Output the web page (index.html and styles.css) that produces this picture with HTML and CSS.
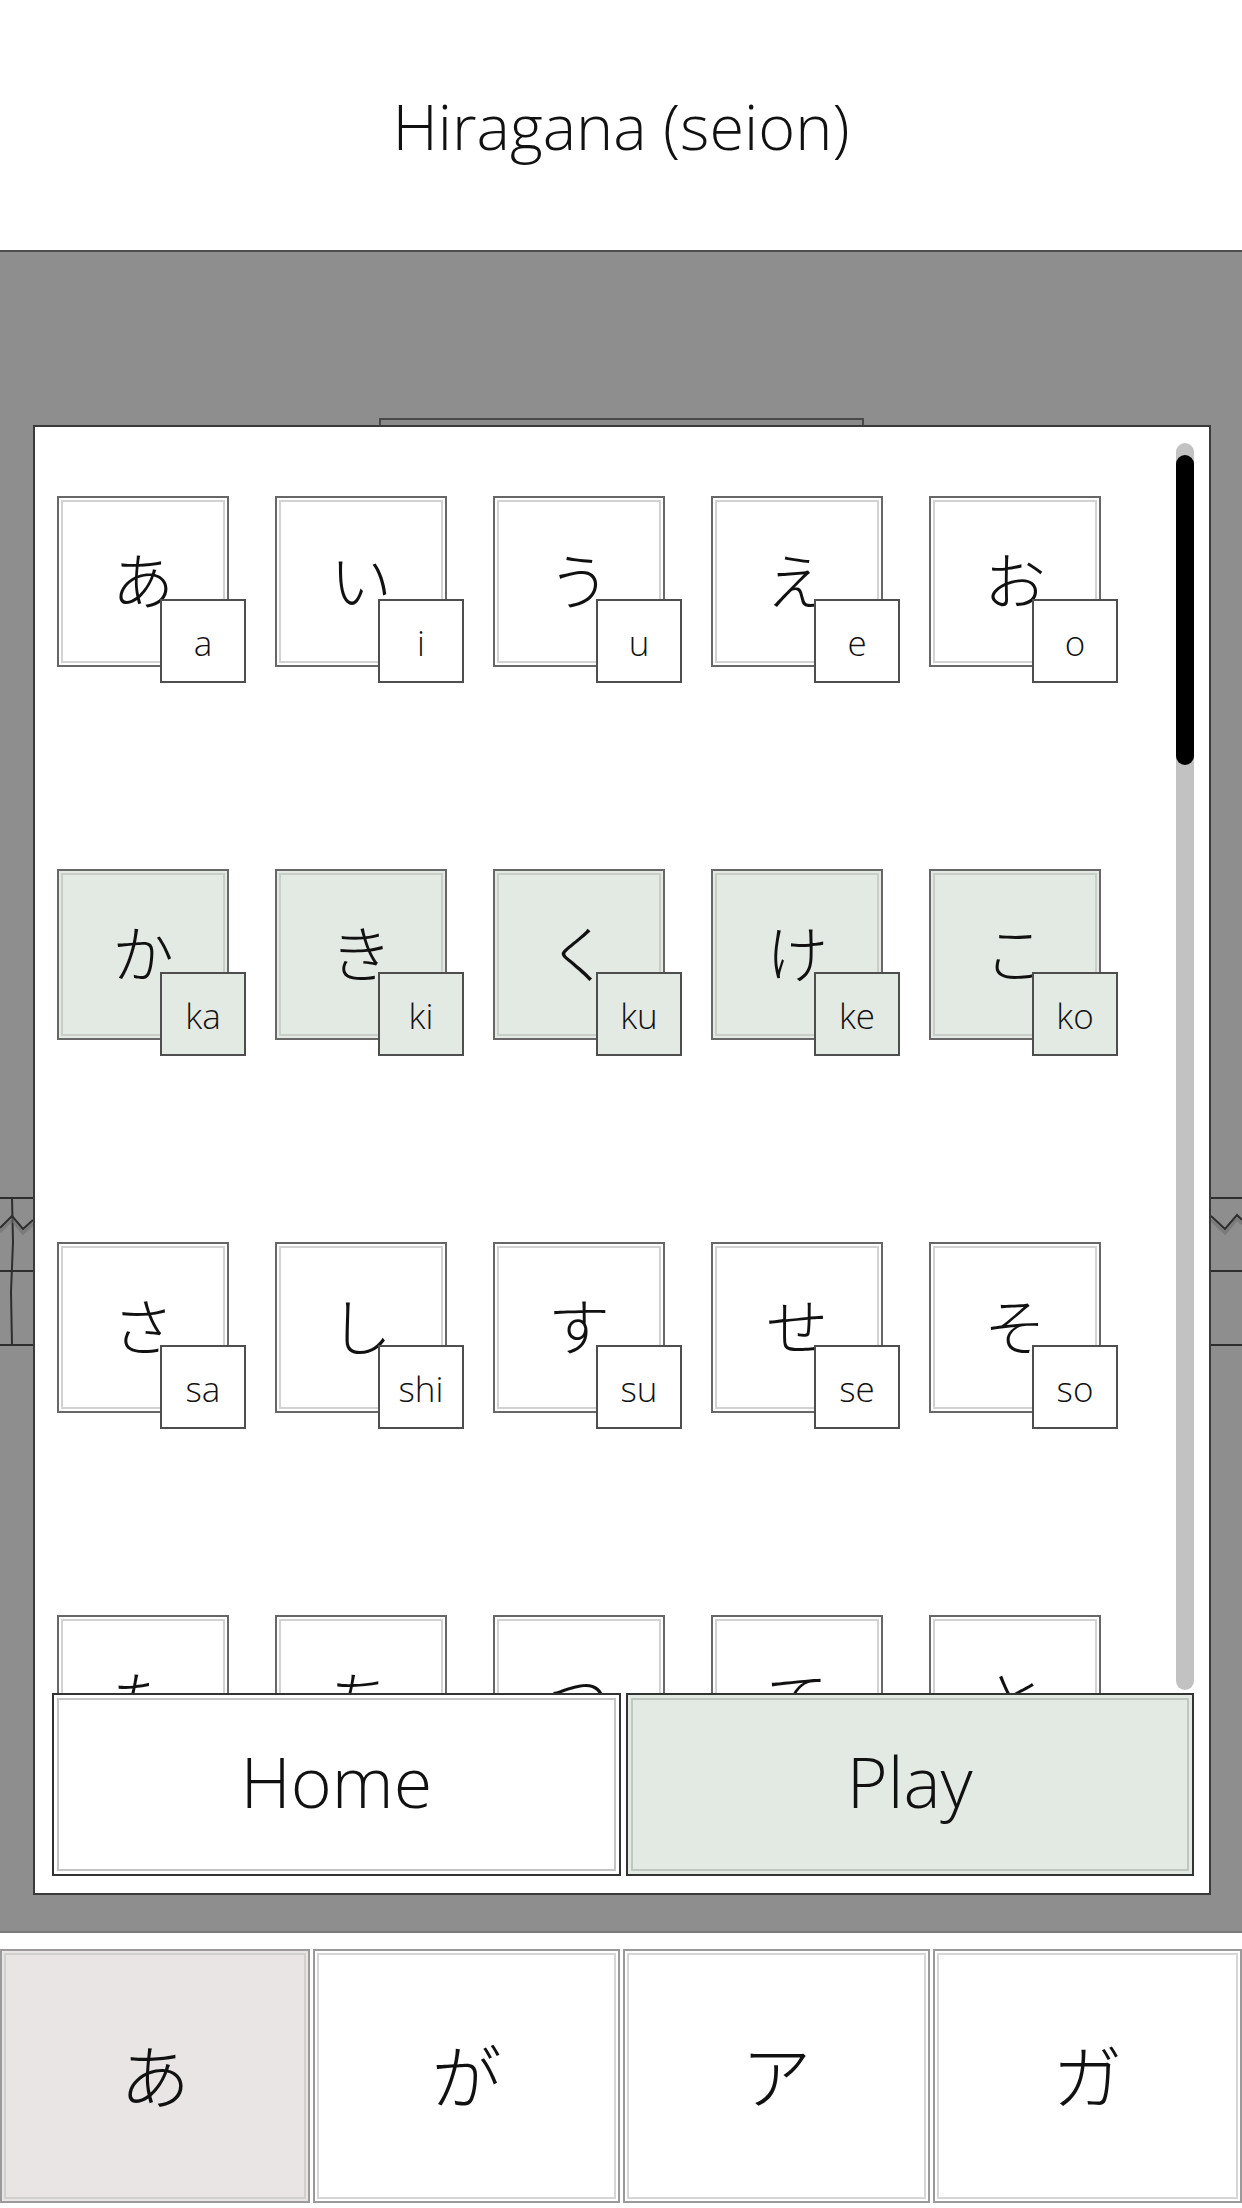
FILE: index.html
```html
<!DOCTYPE html>
<html lang="en">
<head>
    <meta charset="UTF-8">
    <meta name="viewport" content="width=device-width, initial-scale=1.0">
    <title>Hiragana (seion)</title>
    <link rel="stylesheet" href="styles.css">
</head>

<body>
    <header class="title-bar">
        <h1 class="title">Hiragana (seion)</h1>
    </header>

    <main class="stage">
        <!-- bits of the screen underneath the popup -->
        <div class="ghost-tab"></div>
        <svg class="ghost-lines" width="1242" height="1200" viewBox="0 0 1242 1200">
            <g fill="none" stroke="#2e2e2e" stroke-width="2">
                <line x1="0" y1="946" x2="1242" y2="946"/>
                <line x1="0" y1="1019" x2="1242" y2="1019"/>
                <line x1="0" y1="1093" x2="1242" y2="1093"/>
                <path d="M12 946 L13 990 L11 1040 L12 1093"/>
                <path d="M0 976 L12 964 L23 977 L33 968"/>
                <path d="M1211 964 L1225 977 L1237 963 L1242 968"/>
            </g>
            <g fill="none" stroke="#6e6e6e" stroke-width="3" opacity="0.6">
                <path d="M0 980 L12 968 L23 981 L33 972"/>
                <path d="M1211 968 L1225 981 L1237 967 L1242 972"/>
            </g>
        </svg>

        <div class="panel">
            <div class="panel-body">
                <div class="kana-grid" id="kana-grid"></div>
                <div class="scrollbar"><div class="scroll-thumb"></div></div>
            </div>
            <div class="actions">
                <button class="btn btn-home">Home</button>
                <button class="btn btn-play">Play</button>
            </div>
        </div>
    </main>

    <nav class="tabs">
        <div class="tab tab-active">あ</div>
        <div class="tab">が</div>
        <div class="tab">ア</div>
        <div class="tab">ガ</div>
    </nav>

    <script>
        const rows = [
            [['あ','a'],['い','i'],['う','u'],['え','e'],['お','o']],
            [['か','ka'],['き','ki'],['く','ku'],['け','ke'],['こ','ko']],
            [['さ','sa'],['し','shi'],['す','su'],['せ','se'],['そ','so']],
            [['た','ta'],['ち','chi'],['つ','tsu'],['て','te'],['と','to']]
        ];
        let grid = document.getElementById('kana-grid');

        for (let i = 0; i < rows.length; i++) {
            let row = document.createElement('div');
            row.classList.add('kana-row');
            if (i === 1) row.classList.add('kana-row-picked');
            for (let j = 0; j < rows[i].length; j++) {
                let card = document.createElement('div');
                card.classList.add('kana-card');
                card.innerHTML = `<span class="kana">${rows[i][j][0]}</span>
                    <span class="romaji">${rows[i][j][1]}</span>`;
                row.appendChild(card);
            }
            grid.appendChild(row);
        }
    </script>
</body>
</html>
```

FILE: styles.css
```css
body {
    margin: 0;
    width: 1242px;
    height: 2208px;
    overflow: hidden;
    background-color: #fff;
    font-family: 'Open Sans', 'Noto Sans CJK JP', sans-serif;
    font-weight: 300;
    color: #111;
}

.title-bar {
    height: 250px;
    display: flex;
    align-items: center;
    justify-content: center;
    border-bottom: 2px solid #4c4c4c;
}
.title {
    margin: 0;
    font-size: 63px;
    font-weight: 300;
}

.stage {
    position: relative;
    height: 1681px;
    box-sizing: border-box;
    padding: 173px 31px 38px 33px;
    background-color: #8e8e8e;
    border-bottom: 2px solid #7a7a7a;
}
.ghost-tab {
    position: absolute;
    left: 379px;
    top: 166px;
    width: 481px;
    height: 14px;
    border: 2px solid #4a4a4a;
    background-color: #8a8a8a;
}
.ghost-lines {
    position: absolute;
    left: 0;
    top: 0;
}

.panel {
    position: relative;
    height: 1470px;
    box-sizing: border-box;
    display: flex;
    flex-direction: column;
    background-color: #fff;
    border: 2px solid #3a3a3a;
}
.panel-body {
    display: flex;
    height: 1266px;
    overflow: hidden;
}

.kana-grid {
    flex: 1;
    display: flex;
    flex-direction: column;
    gap: 202px;
    padding: 69px 0 0 22px;
}
.kana-row {
    display: flex;
    gap: 46px;
}
.kana-card {
    position: relative;
    flex: none;
    width: 172px;
    height: 171px;
    box-sizing: border-box;
    display: flex;
    align-items: center;
    justify-content: center;
    border: 2px solid #676767;
    background-color: #fff;
    box-shadow: inset 0 0 0 2px #fff, inset 0 0 0 4px #d2d2d2;
}
.kana {
    font-family: 'Noto Sans CJK JP', sans-serif;
    font-weight: 300;
    font-size: 62px;
    line-height: 1;
    margin-bottom: 8px;
}
.romaji {
    position: absolute;
    left: 101px;
    top: 101px;
    width: 86px;
    height: 84px;
    box-sizing: border-box;
    display: flex;
    align-items: center;
    justify-content: center;
    border: 2px solid #4e4e4e;
    background-color: #fff;
    font-size: 35px;
    font-weight: 300;
    padding-top: 2px;
}
.kana-row-picked .kana-card {
    background-color: #e3e9e3;
    box-shadow: inset 0 0 0 2px #e3e9e3, inset 0 0 0 4px #c9cec9;
}
.kana-row-picked .romaji {
    background-color: #e3e9e3;
}

.scrollbar {
    flex: none;
    width: 18px;
    margin: 16px 15px 3px 0;
    border-radius: 9px;
    background-color: #c2c2c2;
}
.scroll-thumb {
    height: 310px;
    margin-top: 12px;
    border-radius: 9px;
    background-color: #000;
}

.actions {
    display: flex;
    gap: 5px;
    padding: 0 15px 17px 17px;
    height: 200px;
    box-sizing: border-box;
}
.btn {
    flex: 1;
    border: 2px solid #333;
    background-color: #fff;
    box-shadow: inset 0 0 0 3px #fff, inset 0 0 0 5px #c4c4c4;
    font-family: 'Open Sans', sans-serif;
    font-weight: 300;
    font-size: 70px;
    color: #111;
    padding: 0 0 8px 0;
    cursor: pointer;
}
.btn-play {
    background-color: #e3e9e3;
    box-shadow: inset 0 0 0 3px #e3e9e3, inset 0 0 0 5px #c0c6c0;
}

.tabs {
    display: grid;
    grid-template-columns: 310px 307px 307px 309px;
    gap: 3px;
    padding: 16px 0 3px 0;
    height: 254px;
}
.tab {
    display: flex;
    align-items: center;
    justify-content: center;
    border: 2px solid #9a9a9a;
    box-shadow: inset 0 0 0 2px #fff, inset 0 0 0 4px #d6d6d6;
    background-color: #fff;
    font-family: 'Noto Sans CJK JP', sans-serif;
    font-weight: 300;
    font-size: 70px;
    padding-bottom: 6px;
}
.tab-active {
    background-color: #e9e5e5;
    box-shadow: inset 0 0 0 2px #e9e5e5, inset 0 0 0 4px #d2cfcf;
}
```
